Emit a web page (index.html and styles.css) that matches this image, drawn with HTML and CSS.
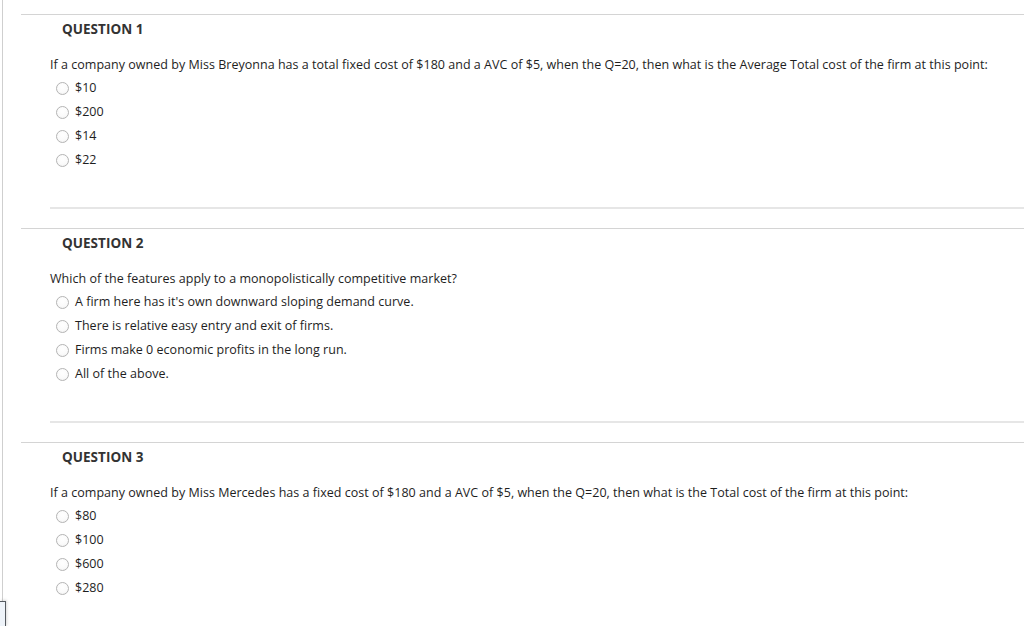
FILE: index.html
```html
<!DOCTYPE html>
<html>
<head>
<meta charset="utf-8">
<link rel="stylesheet" href="styles.css">
</head>
<body>
<div class="page">
  <div class="question">
    <div class="q-head">QUESTION 1</div>
    <div class="q-text">If a company owned by Miss Breyonna has a total fixed cost of $180 and a AVC of $5, when the Q=20, then what is the Average Total cost of the firm at this point:</div>
    <ul class="options">
      <li class="opt"><span class="radio"></span>$10</li>
      <li class="opt"><span class="radio"></span>$200</li>
      <li class="opt"><span class="radio"></span>$14</li>
      <li class="opt"><span class="radio"></span>$22</li>
    </ul>
    <div class="q-sep"></div>
  </div>
  <div class="question">
    <div class="q-head">QUESTION 2</div>
    <div class="q-text">Which of the features apply to a monopolistically competitive market?</div>
    <ul class="options">
      <li class="opt"><span class="radio"></span>A firm here has it's own downward sloping demand curve.</li>
      <li class="opt"><span class="radio"></span>There is relative easy entry and exit of firms.</li>
      <li class="opt"><span class="radio"></span>Firms make 0 economic profits in the long run.</li>
      <li class="opt"><span class="radio"></span>All of the above.</li>
    </ul>
    <div class="q-sep"></div>
  </div>
  <div class="question">
    <div class="q-head">QUESTION 3</div>
    <div class="q-text">If a company owned by Miss Mercedes has a fixed cost of $180 and a AVC of $5, when the Q=20, then what is the Total cost of the firm at this point:</div>
    <ul class="options">
      <li class="opt"><span class="radio"></span>$80</li>
      <li class="opt"><span class="radio"></span>$100</li>
      <li class="opt"><span class="radio"></span>$600</li>
      <li class="opt"><span class="radio"></span>$280</li>
    </ul>
  </div>
</div>
<div class="corner-box"></div>
</body>
</html>
```

FILE: styles.css
```css
html, body {
  margin: 0;
  padding: 0;
  background: #ffffff;
  overflow: hidden;
}
body {
  font-family: "Open Sans", "Liberation Sans", sans-serif;
  font-size: 12.5px;
  letter-spacing: 0.025px;
  color: #1e1e1e;
  width: 1024px;
  height: 626px;
}
.page {
  margin-left: 2px;
  border-left: 1px solid #cfcfcf;
  height: 601px;
  padding-top: 14px;
  box-sizing: border-box;
}
.question {
  margin-left: 18px;
  border-top: 1px solid #d4d4d4;
}
.q-head {
  margin-top: 4px;
  padding-left: 41px;
  font-size: 13.5px;
  font-weight: 700;
  line-height: 20px;
  color: #333333;
}
.q-text {
  margin-top: 17px;
  padding-left: 29px;
  line-height: 18px;
  color: #1e1e1e;
}
.options {
  list-style: none;
  margin: 2px 0 0 0;
  padding: 0 0 0 35px;
}
.opt {
  display: flex;
  align-items: center;
  height: 24px;
  line-height: 24px;
}
.radio {
  display: inline-block;
  width: 11px;
  height: 11px;
  border: 1px solid #b4b4b4;
  border-radius: 50%;
  background: radial-gradient(circle at 50% 35%, #ffffff 0%, #fafafa 60%, #ececec 100%);
  margin-right: 6px;
  flex: none;
}
.q-sep {
  margin-top: 35px;
  margin-left: 29px;
  margin-bottom: 19px;
  height: 2px;
  background: #e6e6e6;
}
.corner-box {
  width: 5px;
  height: 25px;
  border-top: 1px solid #555a60;
  border-right: 1px solid #555a60;
  background: #eef3f9;
  box-shadow: 1px -1px 3px rgba(0,0,0,0.15);
}
```
